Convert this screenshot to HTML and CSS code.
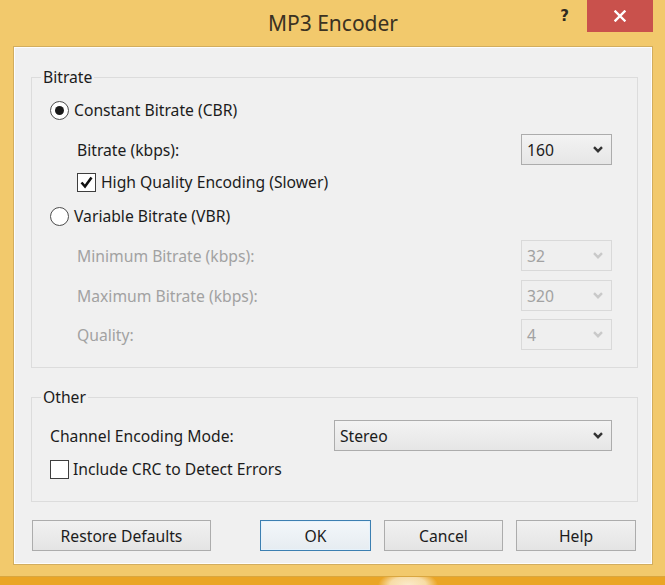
FILE: index.html
```html
<!DOCTYPE html>
<html>
<head>
<meta charset="utf-8">
<title>MP3 Encoder</title>
<link rel="stylesheet" href="styles.css">
</head>
<body>
<div class="window">
  <div class="titlebar">
    <div class="tb-spacer"></div>
    <div class="title">MP3 Encoder</div>
    <div class="caption-btns">
      <span class="help-btn">?</span>
      <span class="close-btn"><svg width="12" height="12" viewBox="0 0 12 12"><path d="M1.5 1.5 L10.5 10.5 M10.5 1.5 L1.5 10.5" stroke="#fff" stroke-width="2.4" stroke-linecap="square"/></svg></span>
    </div>
  </div>
  <div class="client">
    <fieldset class="group group-bitrate">
      <legend>Bitrate</legend>
      <div class="row row-cbr">
        <span class="radio checked"></span><span class="opt-label">Constant Bitrate (CBR)</span>
      </div>
      <div class="row row-field row-rate">
        <span class="field-label">Bitrate (kbps):</span>
        <div class="select small"><span>160</span><svg class="chev" width="10" height="7" viewBox="0 0 10 7"><path d="M1 1.2 L5 5.2 L9 1.2" fill="none" stroke="#333" stroke-width="2.4"/></svg></div>
      </div>
      <div class="row row-hq">
        <span class="checkbox checked"><svg width="15" height="15" viewBox="0 0 15 15"><path d="M2.5 7.5 L6 11.5 L12.5 2.5" fill="none" stroke="#111" stroke-width="2.6"/></svg></span><span class="opt-label">High Quality Encoding (Slower)</span>
      </div>
      <div class="row row-vbr">
        <span class="radio"></span><span class="opt-label">Variable Bitrate (VBR)</span>
      </div>
      <div class="row row-field row-min disabled">
        <span class="field-label">Minimum Bitrate (kbps):</span>
        <div class="select small"><span>32</span><svg class="chev" width="10" height="7" viewBox="0 0 10 7"><path d="M1 1.2 L5 5.2 L9 1.2" fill="none" stroke="#c9c9c9" stroke-width="2.4"/></svg></div>
      </div>
      <div class="row row-field row-max disabled">
        <span class="field-label">Maximum Bitrate (kbps):</span>
        <div class="select small"><span>320</span><svg class="chev" width="10" height="7" viewBox="0 0 10 7"><path d="M1 1.2 L5 5.2 L9 1.2" fill="none" stroke="#c9c9c9" stroke-width="2.4"/></svg></div>
      </div>
      <div class="row row-field row-q disabled">
        <span class="field-label">Quality:</span>
        <div class="select small"><span>4</span><svg class="chev" width="10" height="7" viewBox="0 0 10 7"><path d="M1 1.2 L5 5.2 L9 1.2" fill="none" stroke="#c9c9c9" stroke-width="2.4"/></svg></div>
      </div>
    </fieldset>

    <fieldset class="group group-other">
      <legend>Other</legend>
      <div class="row row-field row-mode">
        <span class="field-label">Channel Encoding Mode:</span>
        <div class="select wide"><span>Stereo</span><svg class="chev" width="10" height="7" viewBox="0 0 10 7"><path d="M1 1.2 L5 5.2 L9 1.2" fill="none" stroke="#333" stroke-width="2.4"/></svg></div>
      </div>
      <div class="row row-crc">
        <span class="checkbox"></span><span class="opt-label">Include CRC to Detect Errors</span>
      </div>
    </fieldset>

    <div class="buttons">
      <button class="btn btn-restore">Restore Defaults</button>
      <button class="btn btn-ok">OK</button>
      <button class="btn btn-cancel">Cancel</button>
      <button class="btn btn-help">Help</button>
    </div>
  </div>
</div>
</body>
</html>
```

FILE: styles.css
```css
* { box-sizing: border-box; }

html, body {
  margin: 0;
  padding: 0;
}

body {
  width: 665px;
  height: 585px;
  overflow: hidden;
  background: radial-gradient(ellipse 30px 14px at 408px 585px, #fbeacb 0%, #f7dca6 60%, rgba(234,166,37,0) 100%), #eaa526;
  font-family: "Noto Sans", "Open Sans", sans-serif;
  font-size: 15.7px;
  color: #1c1c1c;
}

.window {
  width: 665px;
  height: 577px;
  background: #f2c96c;
  padding: 0 12px 0 13px;
  border-bottom: 1px solid #d9a63f;
}

.titlebar {
  height: 46px;
  display: grid;
  grid-template-columns: 1fr auto 1fr;
  align-items: start;
}

.title {
  font-size: 21px;
  line-height: 22px;
  color: #3b3222;
  padding-top: 12px;
}

.caption-btns {
  justify-self: end;
  display: flex;
  align-items: flex-start;
}

.help-btn {
  font-family: "DejaVu Sans", sans-serif;
  font-weight: bold;
  font-size: 15px;
  line-height: 15px;
  color: #2f2a20;
  margin-top: 9px;
  margin-right: 18px;
}

.close-btn {
  width: 66px;
  height: 32px;
  background: #c9514c;
  display: flex;
  align-items: center;
  justify-content: center;
}

.client {
  height: 519px;
  background: #f0f0f0;
  border: 1px solid #d2ad5e;
  box-shadow: inset 0 0 0 1px #fdfdfd;
  padding: 20px 14px 0 17px;
}

.group {
  margin: 0;
  border: 1px solid #dcdcdc;
  padding: 0 25px 0 18px;
  min-width: 0;
}

.group legend {
  padding: 0 2px;
  margin-left: -9px;
  line-height: 20px;
  font-size: 15.7px;
  color: #1c1c1c;
}

.group-bitrate {
  padding-bottom: 17px;
}

.group-other {
  margin-top: 19px;
  padding-bottom: 20px;
}

.row {
  display: flex;
  align-items: center;
  height: 24px;
}

.row-field {
  height: 31px;
  justify-content: space-between;
}

.row-cbr { margin-top: 11px; }
.row-rate { margin-top: 12px; }
.row-hq { margin-top: 5px; }
.row-vbr { margin-top: 10px; }
.row-min { margin-top: 12px; }
.row-max { margin-top: 9px; }
.row-q { margin-top: 8px; }
.row-mode { margin-top: 13px; }
.row-crc { margin-top: 6px; }

.row-rate .field-label,
.row-min .field-label,
.row-max .field-label,
.row-q .field-label,
.row-hq {
  margin-left: 27px;
}

.row-hq .checkbox {
  margin-right: 5px;
}

.disabled { color: #a2a2a2; }

.radio {
  width: 19px;
  height: 19px;
  border: 1px solid #4d4d4d;
  border-radius: 50%;
  background: #fff;
  margin-right: 5px;
  display: flex;
  align-items: center;
  justify-content: center;
  flex: none;
}

.radio.checked::after {
  content: "";
  width: 9px;
  height: 9px;
  border-radius: 50%;
  background: #1a1a1a;
}

.checkbox {
  width: 19px;
  height: 19px;
  border: 1px solid #3e3e3e;
  background: #fff;
  margin-right: 4px;
  display: flex;
  align-items: center;
  justify-content: center;
  flex: none;
}

.select {
  height: 31px;
  border: 1px solid #acacac;
  background: linear-gradient(#f3f3f3, #e6e6e6);
  display: flex;
  align-items: center;
  justify-content: space-between;
  padding: 0 8px 0 5px;
  color: #1c1c1c;
}

.select.small { width: 91px; }
.select.wide { width: 278px; }

.disabled .select {
  border-color: #d9d9d9;
  background: #efefef;
  color: #a2a2a2;
}

.chev { flex: none; }

.buttons {
  display: flex;
  margin-top: 18px;
  padding-left: 1px;
}

.btn {
  height: 31px;
  border: 1px solid #acacac;
  background: linear-gradient(#f1f1f1, #e4e4e4);
  font-family: "Noto Sans", "Open Sans", sans-serif;
  font-size: 15.7px;
  color: #1c1c1c;
  padding: 0;
  border-radius: 0;
}

.btn-restore { width: 179px; }
.btn-ok { width: 111px; margin-left: 49px; border-color: #3c7fb1; box-shadow: inset 0 0 0 1px #e6f2fb; background: linear-gradient(#f3f7fa, #e6ecf1); }
.btn-cancel { width: 119px; margin-left: 13px; }
.btn-help { width: 120px; margin-left: 13px; }
```
